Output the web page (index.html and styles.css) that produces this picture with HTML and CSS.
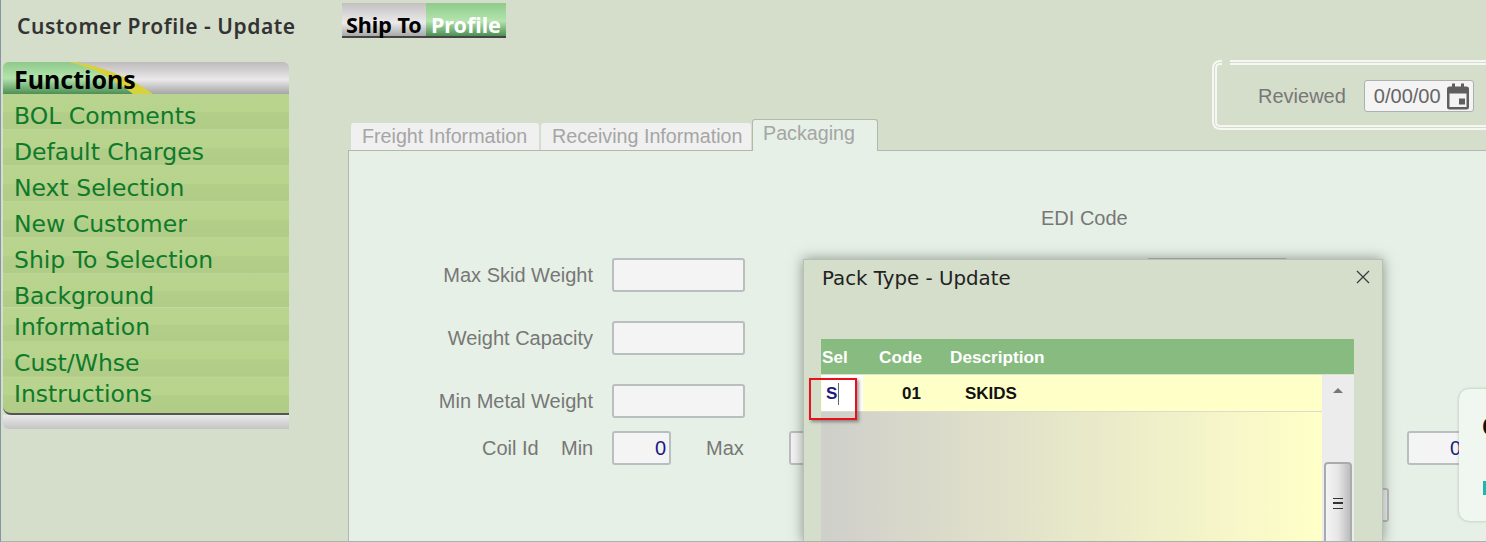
FILE: index.html
```html
<!DOCTYPE html>
<html lang="en">
<head>
    <meta charset="UTF-8">
    <meta name="viewport" content="width=device-width, initial-scale=1.0">
    <title>Customer Profile - Update</title>
    <link rel="stylesheet" href="styles.css">
</head>
<body>
    <div class="page">
        <!-- Top bar -->
        <header class="top-bar">
            <h1 class="page-title">Customer Profile - Update</h1>
            <div class="top-tabs">
                <a class="top-tab grey">Ship To</a>
                <a class="top-tab green">Profile</a>
            </div>
        </header>

        <div class="main">
            <!-- Functions menu -->
            <nav class="menu">
                <div class="menu-head">
                    <svg class="menu-swoosh" viewBox="0 0 150 32" preserveAspectRatio="none" aria-hidden="true">
                        <defs>
                            <linearGradient id="swooshGreen" x1="0" y1="0" x2="0" y2="1">
                                <stop offset="0" stop-color="#8fc98b"/>
                                <stop offset="0.5" stop-color="#b4e4ae"/>
                                <stop offset="1" stop-color="#4d8f55"/>
                            </linearGradient>
                        </defs>
                        <path d="M0 0H70C106 5 134 20 150 32H0Z" fill="#d8d23a"/>
                        <path d="M0 0H66C92 6 112 18 130 32H0Z" fill="url(#swooshGreen)"/>
                    </svg>
                    <span class="menu-title">Functions</span>
                </div>
                <a class="menu-item">BOL Comments</a>
                <a class="menu-item">Default Charges</a>
                <a class="menu-item">Next Selection</a>
                <a class="menu-item">New Customer</a>
                <a class="menu-item">Ship To Selection</a>
                <a class="menu-item wrap">Background<br>Information</a>
                <a class="menu-item wrap last">Cust/Whse<br>Instructions</a>
                <div class="menu-foot"></div>
            </nav>

            <section class="content">
                <div class="review-row">
                    <div class="review-box">
                        <label class="field-label">Reviewed</label>
                        <div class="date-field">
                            <span>0/00/00</span>
                            <svg class="cal-icon" viewBox="0 0 24 26" aria-hidden="true">
                                <path d="M6 0h3v3h6V0h3v3h2.500A2.500 2.500 0 0 1 23 5.500v18a2.500 2.500 0 0 1-2.500 2.500h-17A2.500 2.500 0 0 1 1 23.500v-18A2.500 2.500 0 0 1 3.500 3H6Z M3.500 10v13.500h17V10Z M13 15h6v6h-6Z" fill="#5f5f5f" fill-rule="evenodd"/>
                            </svg>
                        </div>
                    </div>
                </div>

                <div class="tabs">
                    <div class="tab freight">Freight Information</div>
                    <div class="tab receiving">Receiving Information</div>
                    <div class="tab active">Packaging</div>
                </div>

                <div class="panel">
                    <div class="edi-label">EDI Code</div>
                    <div class="form-row first">
                        <label class="field-label wide">Max Skid Weight</label>
                        <div class="input"></div>
                        <div class="input edi-input"></div>
                    </div>
                    <div class="form-row">
                        <label class="field-label wide">Weight Capacity</label>
                        <div class="input"></div>
                    </div>
                    <div class="form-row">
                        <label class="field-label wide">Min Metal Weight</label>
                        <div class="input"></div>
                    </div>
                    <div class="form-row coil">
                        <label class="field-label coil-id">Coil Id</label>
                        <label class="field-label coil-min">Min</label>
                        <div class="input small">0</div>
                        <label class="field-label coil-max">Max</label>
                        <div class="input small max-input"></div>
                        <div class="input small far-input">0</div>
                    </div>
                    <div class="form-row tail">
                        <div class="input tail-input"></div>
                    </div>
                </div>
            </section>
        </div>

        <!-- Pack type dialog -->
        <div class="dialog">
            <div class="dialog-head">
                <h2 class="dialog-title">Pack Type - Update</h2>
                <svg class="dialog-close" viewBox="0 0 14 14" aria-hidden="true">
                    <path d="M1 1L13 13M13 1L1 13" stroke="#3c3c3c" stroke-width="1.300" fill="none"/>
                </svg>
            </div>
            <div class="grid">
                <div class="grid-head">
                    <span class="col-sel">Sel</span>
                    <span class="col-code">Code</span>
                    <span class="col-desc">Description</span>
                </div>
                <div class="grid-body">
                    <div class="rows">
                        <div class="row">
                            <div class="sel-cell"><span class="sel-value">S</span></div>
                            <span class="row-code">01</span>
                            <span class="row-desc">SKIDS</span>
                        </div>
                    </div>
                    <div class="scrollbar">
                        <svg class="scroll-up" viewBox="0 0 10 5" aria-hidden="true"><path d="M0 5L5 0L10 5Z" fill="#777"/></svg>
                        <div class="scroll-thumb"><span class="grip"></span></div>
                    </div>
                </div>
            </div>
        </div>

        <!-- Focus marker on the Sel cell -->
        <div class="sel-marker"></div>

        <!-- Card cut off at the window edge -->
        <div class="side-card">
            <span class="side-card-text">C</span>
            <span class="side-card-chip"></span>
        </div>
    </div>
</body>
</html>
```

FILE: styles.css
```css
/* Page shell */
html, body {
    margin: 0;
    height: 100%;
    overflow: hidden;
}

body {
    background-color: #d5decb;
    color: #333;
    font-family: "Liberation Sans", Arial, sans-serif;
}

.page {
    position: relative;
    height: 542px;
    box-sizing: border-box;
    border-left: 1px solid #8496a6;
    border-bottom: 1px solid #a9b3ad;
    overflow: hidden;
}

/* Top bar */
.top-bar {
    display: flex;
    align-items: flex-start;
    height: 62px;
    box-sizing: border-box;
    padding: 3px 0 0 16px;
}

.page-title {
    width: 325px;
    margin: 9px 0 0;
    font-family: "Noto Sans", sans-serif;
    font-size: 21px;
    line-height: 28px;
    font-weight: 600;
    letter-spacing: 0.55px;
    color: #333333;
    white-space: nowrap;
}

.top-tabs {
    display: flex;
    border-bottom: 2px solid #444;
}

.top-tab {
    height: 33px;
    line-height: 44px;
    box-sizing: border-box;
    font-family: "Noto Sans", sans-serif;
    font-size: 21.500px;
    font-weight: 700;
    white-space: nowrap;
}

.top-tab.grey {
    width: 84px;
    padding-left: 4px;
    color: #000;
    background: linear-gradient(#c2c0c0, #eceaea 60%, #a8a8a8);
}

.top-tab.green {
    width: 80px;
    padding-left: 5px;
    color: #fff;
    background: linear-gradient(#8fcb8b, #b3e4ad 55%, #4d8f55);
}

.main {
    display: flex;
}

/* Functions menu */
.menu {
    flex: 0 0 286px;
    margin-left: 2px;
    align-self: flex-start;
}

.menu-head {
    position: relative;
    height: 32px;
    border-radius: 6px 6px 0 0;
    background: linear-gradient(#bdbbbb, #eae8e8 55%, #a5a5a5);
}

.menu-swoosh {
    position: absolute;
    left: 0;
    top: 0;
    width: 150px;
    height: 32px;
    border-top-left-radius: 6px;
}

.menu-title {
    position: relative;
    display: block;
    padding-left: 11px;
    font-family: "Noto Sans", sans-serif;
    font-size: 25px;
    font-weight: 700;
    line-height: 34px;
    color: #000;
}

.menu-item {
    display: block;
    box-sizing: border-box;
    height: 36px;
    padding-left: 11px;
    font-family: "DejaVu Sans", sans-serif;
    font-size: 23.500px;
    line-height: 44px;
    color: #0e7a2a;
    background: linear-gradient(#b9d48e, #b8d38c 50%, #b3ce89 52%, #b1cc86 96%, #c2d99c);
    white-space: nowrap;
}

.menu-item.wrap {
    height: 67px;
    line-height: 31px;
    padding-top: 7px;
    background: linear-gradient(#b9d48e, #b8d38c 25%, #b3ce89 26%, #b1cc86 49%, #c2d99c 50%, #b9d48e 51%, #b8d38c 75%, #b3ce89 76%, #b1cc86 100%);
}

.menu-item.last {
    height: 74px;
    border-radius: 0 0 0 8px;
    border-bottom: 2px solid #555;
}

.menu-foot {
    height: 14px;
    border-radius: 0 0 0 6px;
    background: linear-gradient(#eaeaea, #c4c4c4);
}

/* Main content */
.content {
    flex: 1;
    min-width: 0;
    margin-left: 59px;
}

.review-row {
    display: flex;
    height: 57px;
}

.review-box {
    position: relative;
    display: flex;
    align-items: center;
    width: 320px;
    height: 70px;
    box-sizing: border-box;
    margin: -2px 0 0 864px;
    padding: 2px 0 0 41px;
    border: 5px double #f6f7f2;
    border-right: none;
    border-radius: 8px 0 0 8px;
}

/* small break in the frame's top edge */
.review-box::before {
    content: "";
    position: absolute;
    left: 5px;
    top: -5px;
    width: 8px;
    height: 5px;
    background-color: #d5decb;
}

.field-label {
    font-size: 20px;
    color: #777;
    white-space: nowrap;
}

.date-field {
    display: flex;
    align-items: center;
    gap: 5px;
    width: 110px;
    height: 32px;
    box-sizing: border-box;
    margin-left: 18px;
    padding-left: 9px;
    background-color: #f4f4f4;
    border: 1px solid #a9b0ae;
    border-radius: 3px;
    font-size: 20px;
    color: #666;
}

.cal-icon {
    width: 24px;
    height: 27px;
}

/* Tabs */
.tabs {
    display: flex;
    align-items: flex-end;
    height: 31px;
    padding-left: 3px;
    gap: 2px;
}

.tab {
    height: 27px;
    box-sizing: border-box;
    padding-left: 11px;
    line-height: 27px;
    font-size: 19.700px;
    color: #a5a5a5;
    background-color: #f0f0f0;
    border-radius: 3px 3px 0 0;
    white-space: nowrap;
}

.tab.freight {
    width: 188px;
}

.tab.receiving {
    width: 210px;
}

.tab.active {
    height: 32px;
    width: 126px;
    margin-left: -1px;
    margin-bottom: -1px;
    padding-left: 10px;
    line-height: 26px;
    position: relative;
    background-color: #e6f0e6;
    border: 1px solid #b2b9ac;
    border-bottom: none;
}

.panel {
    height: 392px;
    box-sizing: border-box;
    padding-top: 56px;
    background-color: #e6f0e6;
    border-top: 1px solid #b2b9ac;
    border-left: 1px solid #b2b9ac;
}

.edi-label {
    margin: 0 0 0 692px;
    height: 23px;
    line-height: 22px;
    font-size: 20px;
    color: #777;
}

.form-row {
    display: flex;
    align-items: center;
    margin-top: 29px;
    height: 34px;
}

.form-row.first {
    margin-top: 28px;
}

.form-row.coil {
    margin-top: 13px;
}

.form-row.tail {
    margin-top: 23px;
}

.field-label.wide {
    width: 245px;
    box-sizing: border-box;
    padding-right: 1px;
    text-align: right;
}

.input {
    width: 133px;
    height: 34px;
    box-sizing: border-box;
    margin-left: 18px;
    background-color: #f4f4f4;
    border: 2px solid #b9bec0;
    border-radius: 3px;
}

.input.small {
    width: 59px;
    padding-right: 3px;
    line-height: 30px;
    text-align: right;
    font-size: 20px;
    color: #1a1a80;
}

.edi-input {
    margin-left: 402px;
    width: 140px;
    height: 2px;
    align-self: flex-start;
}

.coil-id {
    margin-left: 133px;
    width: 57px;
}

.coil-min {
    margin-left: 22px;
    width: 33px;
}

.coil-max {
    margin-left: 35px;
    width: 38px;
}

.input.max-input {
    margin-left: 45px;
}

.input.far-input {
    margin-left: 559px;
}

.tail-input {
    margin-left: 1010px;
    width: 30px;
}

/* Pack type dialog */
.dialog {
    position: absolute;
    left: 802px;
    top: 259px;
    width: 580px;
    height: 283px;
    box-sizing: border-box;
    padding: 0 28px 0 17px;
    background-color: #d5decb;
    border: 1px solid #b8c0b4;
    box-shadow: 0 0 12px rgba(60, 70, 60, 0.55);
}

.dialog-head {
    display: flex;
    justify-content: space-between;
    height: 79px;
}

.dialog-title {
    margin: 7px 0 0 1px;
    font-family: "DejaVu Sans", sans-serif;
    font-size: 19.800px;
    font-weight: 400;
    color: #222;
}

.dialog-close {
    width: 14px;
    height: 14px;
    margin: 10px -16px 0 0;
}

.grid {
    display: flex;
    flex-direction: column;
}

.grid-head {
    display: flex;
    align-items: center;
    height: 36px;
    box-sizing: border-box;
    padding-top: 1px;
    background-color: #88bb80;
    border-bottom: 1px solid #d8e3cc;
    font-size: 17.200px;
    font-weight: 700;
    color: #fff;
}

.col-sel {
    width: 58px;
    box-sizing: border-box;
    padding-left: 1px;
}

.col-code {
    width: 71px;
}

.grid-body {
    display: flex;
    height: 170px;
}

.rows {
    flex: 1;
    background: linear-gradient(90deg, #cfcfcb, #ffffc8);
}

.row {
    display: flex;
    align-items: center;
    height: 36px;
    background-color: #ffffc8;
    border-bottom: 1px solid #dcdccc;
    font-size: 17px;
    font-weight: 700;
    color: #111;
}

.row-code,
.row-desc {
    margin-top: 2px;
}

.sel-cell {
    width: 41px;
    height: 36px;
    margin-left: 1px;
    box-sizing: border-box;
    padding-left: 4px;
    background-color: #fff;
}

.sel-value {
    display: inline-block;
    height: 22px;
    margin-top: 8px;
    padding-right: 1px;
    border-right: 1px solid #666;
    line-height: 22px;
    color: #1a1a80;
}

.row-code {
    width: 102px;
    padding-left: 39px;
    box-sizing: border-box;
}

.scrollbar {
    position: relative;
    width: 32px;
    background-color: #ececec;
}

.scroll-up {
    position: absolute;
    left: 11px;
    top: 13px;
    width: 10px;
    height: 5px;
}

.scroll-thumb {
    position: absolute;
    left: 2px;
    top: 87px;
    width: 28px;
    height: 120px;
    box-sizing: border-box;
    border: 2px solid #a9acae;
    border-radius: 4px;
    background: linear-gradient(90deg, #f4f4f4, #e6e6e6 50%, #bcbcbc);
}

.grip {
    position: absolute;
    left: 7px;
    top: 34px;
    width: 10px;
    height: 9px;
    border-top: 1px solid #333;
    border-bottom: 1px solid #333;
    background: linear-gradient(transparent 3px, #333 3px, #333 5px, transparent 5px);
}

.sel-marker {
    position: absolute;
    left: 808px;
    top: 378px;
    width: 48px;
    height: 42px;
    box-sizing: border-box;
    border: 2px solid #e8101a;
    box-shadow: 2px 2px 3px rgba(60, 60, 60, 0.5);
}

.side-card {
    position: absolute;
    left: 1458px;
    top: 389px;
    width: 60px;
    height: 132px;
    border-radius: 10px;
    background-color: #f0f6f0;
    box-shadow: 0 0 3px rgba(120, 130, 120, 0.5);
}

.side-card-text {
    position: absolute;
    left: 23px;
    top: 22px;
    font-size: 28px;
    font-weight: 700;
    color: #111;
}

.side-card-chip {
    position: absolute;
    left: 24px;
    top: 92px;
    width: 10px;
    height: 14px;
    background-color: #1fb5b0;
}
```
